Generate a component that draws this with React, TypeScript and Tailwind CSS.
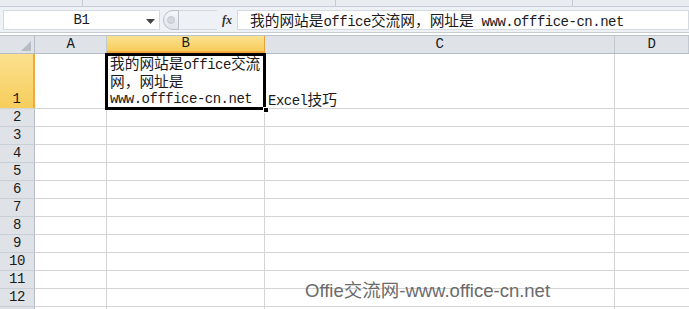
import React from "react"

const CJK = /[\u3000-\u9fff\uff00-\uffef]/

// Excel 宋体 look: CJK full-width, latin half-width
const Mixed = ({ text }: { text: string }) => {
    const runs: { cjk: boolean; s: string }[] = []
    for (const ch of text) {
        const cjk = CJK.test(ch)
        const last = runs[runs.length - 1]
        if (last && last.cjk === cjk) last.s += ch
        else runs.push({ cjk, s: ch })
    }
    return (
        <>
            {runs.map((r, i) =>
                r.cjk ? (
                    <span key={i} className="text-[14.7px] font-[family-name:'Noto_Sans_CJK_SC',sans-serif]">{r.s}</span>
                ) : (
                    <span key={i} className="text-[14px] tracking-[-0.5px] font-[family-name:'Liberation_Mono',monospace] whitespace-pre">{r.s}</span>
                )
            )}
        </>
    )
}

const cols = [
    { name: "A", w: "w-[72px]" },
    { name: "B", w: "w-[158px]" },
    { name: "C", w: "w-[350px]" },
    { name: "D", w: "flex-1" },
]

const rows = [2, 3, 4, 5, 6, 7, 8, 9, 10, 11, 12, 13]

export default function App() {
    return (
        <div className="relative w-[689px] h-[309px] overflow-hidden bg-white text-[#1a1a1a] text-[14.6px] font-[family-name:'Liberation_Mono','Noto_Sans_CJK_SC',monospace]">
            {/* ribbon remnant */}
            <div className="flex h-[7px] bg-[#e9edf2] border-b border-[#c5ccd5]">
                <div className="w-[83px] border-r border-[#c5ccd5]" />
                <div className="w-[253px] border-r border-[#c5ccd5]" />
                <div className="w-[237px] border-r border-[#c5ccd5]" />
                <div className="flex-1" />
            </div>

            {/* formula bar */}
            <div className="flex h-[26px] bg-[#eef1f5] pt-[3px] pb-[2px] border-b border-[#c5ccd5]">
                <div className="ml-[3px] w-[157px] bg-white border border-[#d5dae0] flex items-center relative">
                    <div className="flex-1 text-center h-[18px] leading-[18px]"><Mixed text="B1" /></div>
                    <svg width="9" height="5" viewBox="0 0 9 5" className="absolute right-[4px] top-[8px]">
                        <path d="M0 0 L9 0 L4.5 5 Z" fill="#444" />
                    </svg>
                </div>
                <div className="w-[77px] flex items-center">
                    <div className="ml-[3px] w-[16px] h-[20px] rounded-l-full border border-[#b8bfc8] bg-gradient-to-b from-[#f6f8fa] to-[#dfe4ea] flex items-center justify-center">
                        <div className="w-[8px] h-[8px] rounded-full bg-[#d3d8de] border border-[#c3c9d0]" />
                    </div>
                    <div className="flex-1 h-[20px] border-y border-[#d5dae0] bg-[#eef1f5]" />
                    <span className="w-[20px] text-center italic font-bold text-[12px] text-[#333] font-[family-name:'Liberation_Serif',serif]">fx</span>
                </div>
                <div className="flex-1 bg-white border border-[#d5dae0] flex items-center pl-[12px]">
                    <div className="h-[18px] leading-[18px] whitespace-nowrap">
                        <Mixed text="我的网站是office交流网，网址是 www.offfice-cn.net" />
                    </div>
                </div>
            </div>

            {/* sheet */}
            <div className="relative mt-[2px] border-t border-[#b9c3cd]">
                {/* header row */}
                <div className="flex h-[18px] bg-[#dfe3e8] border-b border-[#b4bcc6]">
                    <div className="w-[35px] border-r border-[#b4bcc6] relative">
                        <svg width="10" height="10" viewBox="0 0 10 10" className="absolute right-[3px] bottom-[2px]">
                            <path d="M10 0 L10 10 L0 10 Z" fill="#b5bcc4" />
                        </svg>
                    </div>
                    {cols.map((c) => (
                        <div
                            key={c.name}
                            className={`${c.w} flex items-center justify-center h-[17px] leading-[17px] border-r ${
                                c.name === "B"
                                    ? "bg-gradient-to-b from-[#fbe18e] to-[#f7cd5a] border-[#e3a23a] border-b-2 border-b-[#f2a83c]"
                                    : "border-[#c3c9d0]"
                            }`}
                        >
                            <Mixed text={c.name} />
                        </div>
                    ))}
                </div>

                {/* row 1 */}
                <div className="flex h-[55px] border-b border-[#d4d4d4]">
                    <div className="w-[35px] bg-gradient-to-b from-[#fbe18e] to-[#f7cd5a] border-r-2 border-[#f2a83c] flex items-end justify-center">
                        <div className="h-[18px] leading-[18px]"><Mixed text="1" /></div>
                    </div>
                    <div className="w-[72px] border-r border-[#d4d4d4]" />
                    <div className="w-[158px] border-r border-[#d4d4d4] flex flex-col justify-end pl-[3px] whitespace-nowrap">
                        <div className="h-[18px] leading-[18px]"><Mixed text="我的网站是office交流" /></div>
                        <div className="h-[18px] leading-[18px]"><Mixed text="网，网址是" /></div>
                        <div className="h-[18px] leading-[18px]"><Mixed text="www.offfice-cn.net" /></div>
                    </div>
                    <div className="w-[350px] border-r border-[#d4d4d4] flex items-end pl-[3px]">
                        <div className="h-[18px] leading-[18px]"><Mixed text="Excel技巧" /></div>
                    </div>
                    <div className="flex-1" />
                </div>

                {rows.map((r) => (
                    <div key={r} className="flex h-[18px] border-b border-[#d4d4d4]">
                        <div className="w-[35px] bg-[#dfe3e8] border-r border-[#b4bcc6] border-b border-b-[#c9cfd6] flex items-center justify-center -mb-px">
                            <div className="h-[17px] leading-[17px]"><Mixed text={String(r)} /></div>
                        </div>
                        <div className="w-[72px] border-r border-[#d4d4d4]" />
                        <div className="w-[158px] border-r border-[#d4d4d4]" />
                        <div className="w-[350px] border-r border-[#d4d4d4]" />
                        <div className="flex-1" />
                    </div>
                ))}

                {/* selection B1 */}
                <div className="absolute left-[105px] top-[17px] w-[161px] h-[57px] border-[3px] border-black pointer-events-none" />
                <div className="absolute left-[263px] top-[71px] w-[6px] h-[6px] bg-black border border-white" />
            </div>

            {/* watermark */}
            <div className="absolute left-[305px] top-[277px] text-[18.5px] text-[#6b6b6b] font-[family-name:'Liberation_Sans','Noto_Sans_CJK_SC',sans-serif] whitespace-nowrap">
                Offie交流网-www.office-cn.net
            </div>
        </div>
    )
}
